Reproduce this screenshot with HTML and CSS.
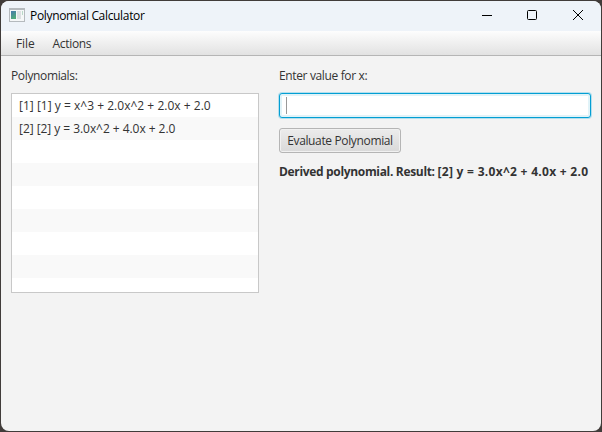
FILE: index.html
```html
<!DOCTYPE html>
<html lang="en">
<head>
<meta charset="utf-8">
<title>Polynomial Calculator</title>
<link rel="stylesheet" href="styles.css">
</head>
<body>
<div class="window">
  <header class="titlebar">
    <svg class="app-icon" width="16" height="14" viewBox="0 0 16 14">
      <defs><linearGradient id="pane" x2="0.4" y2="1"><stop stop-color="#4779ae"/><stop offset="1" stop-color="#50aa7a"/></linearGradient></defs>
      <path fill="#b5babe" d="M0 0h16v14H0z"/>
      <path fill="#f5f7f8" d="M1 2h14v11H1z"/>
      <path fill="url(#pane)" d="M2 3h5v8H2z"/>
      <path fill="#dce0e2" d="M8 3h4v8H8z"/>
      <path fill="#b9d9c8" d="M13 3h1v4h-1z"/>
    </svg>
    <span class="title">Polynomial Calculator</span>
    <svg class="controls" width="104" height="12" viewBox="0 0 104 12" fill="none" stroke="#000">
      <path d="M0 6.5h10"/>
      <rect x="45.5" y="1.5" width="9" height="9" rx="1"/>
      <path d="M91 1l10 10M101 1L91 11"/>
    </svg>
  </header>
  <nav class="menubar"><span class="file">File</span><span class="actions">Actions</span></nav>
  <main class="content">
    <section class="left">
      <div class="label polys">Polynomials:</div>
      <ul class="list">
        <li><span class="first">[1] [1] y = x^3 + 2.0x^2 + 2.0x + 2.0</span></li>
        <li><span class="second">[2] [2] y = 3.0x^2 + 4.0x + 2.0</span></li>
        <li></li><li></li><li></li><li></li><li></li><li></li><li></li>
      </ul>
    </section>
    <section class="right">
      <div class="label enter">Enter value for x:</div>
      <div class="field"><i class="caret"></i></div>
      <button class="button">Evaluate Polynomial</button>
      <div class="result">Derived polynomial. Result: <span class="formula">[2] y = 3.0x^2 + 4.0x + 2.0</span></div>
    </section>
  </main>
</div>
</body>
</html>
```
FILE: styles.css
```css
* { box-sizing: border-box; }
body {
  margin: 0;
  padding: 1px;
  height: 432px;
  overflow: hidden;
  background: #413c3a;
  font: 12px/16px "Open Sans", "Noto Sans", sans-serif;
  color: #333;
  white-space: nowrap;
}
.window {
  height: 430px;
  border-radius: 8px;
  overflow: hidden;
  background: #f3f3f3;
}
.titlebar {
  display: flex;
  align-items: center;
  height: 30px;
  padding: 0 15px 0 8px;
  background: #eef3f9;
  color: #000;
}
.app-icon { margin-top: -2px; }
.title { margin-left: 5px; letter-spacing: -0.33px; }
.controls { margin-left: auto; margin-top: -2px; }
.menubar {
  display: flex;
  align-items: center;
  height: 25px;
  padding: 2px 0 0 15px;
  border-bottom: 1px solid #b5b5b5;
  background: linear-gradient(#fdfdfd, #e2e2e2);
}
.file { letter-spacing: -0.1px; }
.actions { margin-left: 18px; letter-spacing: -0.33px; }
.content {
  display: grid;
  grid-template-columns: 248px 312px;
  gap: 20px;
  padding: 10px;
}
.label { height: 17px; line-height: 19px; margin-bottom: 10px; letter-spacing: -0.36px; }
.list {
  height: 200px;
  margin: 0;
  padding: 0;
  list-style: none;
  overflow: hidden;
  border: 1px solid #c8c8c8;
  background: #fff;
}
.list li { height: 23px; padding-left: 7px; line-height: 23px; }
.list li:nth-child(even) { background: #f9f9f9; }
.first { letter-spacing: 0.02px; }
.second { letter-spacing: -0.05px; }
.field {
  height: 25px;
  padding: 3px 6px;
  border: 1px solid #039ed3;
  border-radius: 3px;
  background: #fff;
  box-shadow: 0 0 0 1px #b4dfed, inset 0 0 0 2px #e1f3f8;
}
.caret { display: block; width: 1px; height: 17px; background: #999; }
.button {
  display: block;
  width: 122px;
  height: 25px;
  margin: 10px 0;
  padding: 0;
  border: 1px solid #b5b5b5;
  border-radius: 3px;
  background: linear-gradient(#ececec, #d9d9d9);
  box-shadow: inset 0 0 0 1px #f1f1f1;
  font: inherit;
  letter-spacing: -0.36px;
  color: #333;
}
.result { font-weight: 700; line-height: 18px; letter-spacing: -0.33px; }
.formula { letter-spacing: 0.29px; }
```
